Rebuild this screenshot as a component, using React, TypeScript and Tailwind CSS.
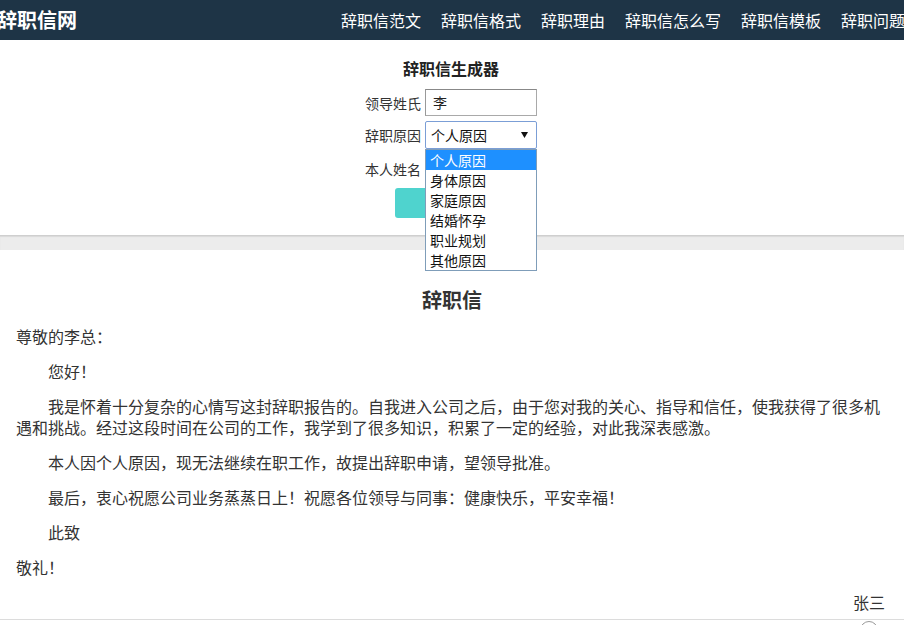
import React from 'react';

const navItems = ['辞职信范文', '辞职信格式', '辞职理由', '辞职信怎么写', '辞职信模板', '辞职问题'];
const reasons = ['个人原因', '身体原因', '家庭原因', '结婚怀孕', '职业规划', '其他原因'];

const font = { fontFamily: '"Noto Sans CJK SC", "Noto Sans", sans-serif' };

function Header() {
  return (
    <div className="h-[40px] bg-[#1e3446] flex items-center overflow-hidden whitespace-nowrap">
      <div className="-ml-[3px] text-[20px] leading-[40px] font-bold text-white">辞职信网</div>
      <div className="flex ml-[254px]">
        {navItems.map((item) => (
          <span key={item} className="px-[10px] text-[16px] leading-[40px] text-white shrink-0">
            {item}
          </span>
        ))}
      </div>
    </div>
  );
}

function Generator() {
  return (
    <div className="flex flex-col items-center pt-[16px] pb-[17px] text-[#333] -ml-[2px]">
      <h2 className="text-[16px] leading-[24px] font-bold text-[#222]">辞职信生成器</h2>
      <div className="mt-[9px] flex items-center gap-[4px]">
        <label className="w-[56px] text-[14px] leading-[20px]">领导姓氏</label>
        <div className="w-[112px] h-[27px] border border-[#a9a9a9] border-t-[#888] border-l-[#999] flex items-center px-[7px] text-[14px] text-[#222]">
          李
        </div>
      </div>
      <div className="mt-[5px] flex items-center gap-[4px] relative">
        <label className="w-[56px] text-[14px] leading-[20px]">辞职原因</label>
        <div className="w-[112px] h-[28px] border border-[#7b9ed6] rounded-[2px] flex items-center justify-between pl-[5px] pr-[7px] text-[14px] text-[#111]">
          <span>个人原因</span>
          <svg width="7" height="6" viewBox="0 0 7 6" className="mr-[1px]">
            <path d="M0 0 H7 L3.5 6 Z" fill="#111" />
          </svg>
        </div>
        <div className="absolute left-[60px] top-[28px] w-[112px] bg-white border border-[#7f9db9] z-10">
          {reasons.map((r, i) => (
            <div
              key={r}
              className={
                i === 0
                  ? 'h-[20px] leading-[20px] px-[4px] text-[14px] bg-[#1e90ff] text-white'
                  : 'h-[20px] leading-[20px] px-[4px] text-[14px] text-[#111]'
              }
            >
              {r}
            </div>
          ))}
        </div>
      </div>
      <div className="mt-[6px] flex items-center gap-[4px]">
        <label className="w-[56px] text-[14px] leading-[20px]">本人姓名</label>
        <div className="w-[112px] h-[27px] border border-[#a9a9a9] flex items-center px-[7px] text-[14px]">
          张三
        </div>
      </div>
      <button className="mt-[6px] w-[112px] h-[30px] rounded-[3px] bg-[#4fd3ce] text-white text-[14px] -ml-[1px]">
        生成
      </button>
    </div>
  );
}

function Letter() {
  const p = 'text-[16px] leading-[21px] text-[#333] mt-[14px]';
  return (
    <div className="px-[16px] pt-[35px] text-[#333]">
      <h1 className="text-center text-[20px] leading-[30px] font-bold text-[#333]">辞职信</h1>
      <p className="text-[16px] leading-[21px] mt-[11px]">尊敬的李总：</p>
      <p className={p + ' indent-[2em]'}>您好！</p>
      <p className={p + ' indent-[2em]'}>
        我是怀着十分复杂的心情写这封辞职报告的。自我进入公司之后，由于您对我的关心、指导和信任，使我获得了很多机遇和挑战。经过这段时间在公司的工作，我学到了很多知识，积累了一定的经验，对此我深表感激。
      </p>
      <p className={p + ' indent-[2em]'}>本人因个人原因，现无法继续在职工作，故提出辞职申请，望领导批准。</p>
      <p className={p + ' indent-[2em]'}>最后，衷心祝愿公司业务蒸蒸日上！祝愿各位领导与同事：健康快乐，平安幸福！</p>
      <p className={p + ' indent-[2em]'}>此致</p>
      <p className={p}>敬礼！</p>
      <p className={p + ' text-right pr-[3px]'}>张三</p>
    </div>
  );
}

export default function App() {
  return (
    <div className="w-[904px] h-[625px] overflow-hidden bg-white relative" style={font}>
      <Header />
      <Generator />
      <div className="h-[15px] bg-[#ececec] border-t border-[#cfcfcf] shadow-[inset_0_1px_1px_rgba(0,0,0,0.08)]" />
      <Letter />
      <div className="mt-[6px] border-t border-[#dcdcdc]" />
      <div className="absolute left-[860px] top-[621px] w-[18px] h-[18px] rounded-full border border-[#999]" />
    </div>
  );
}
